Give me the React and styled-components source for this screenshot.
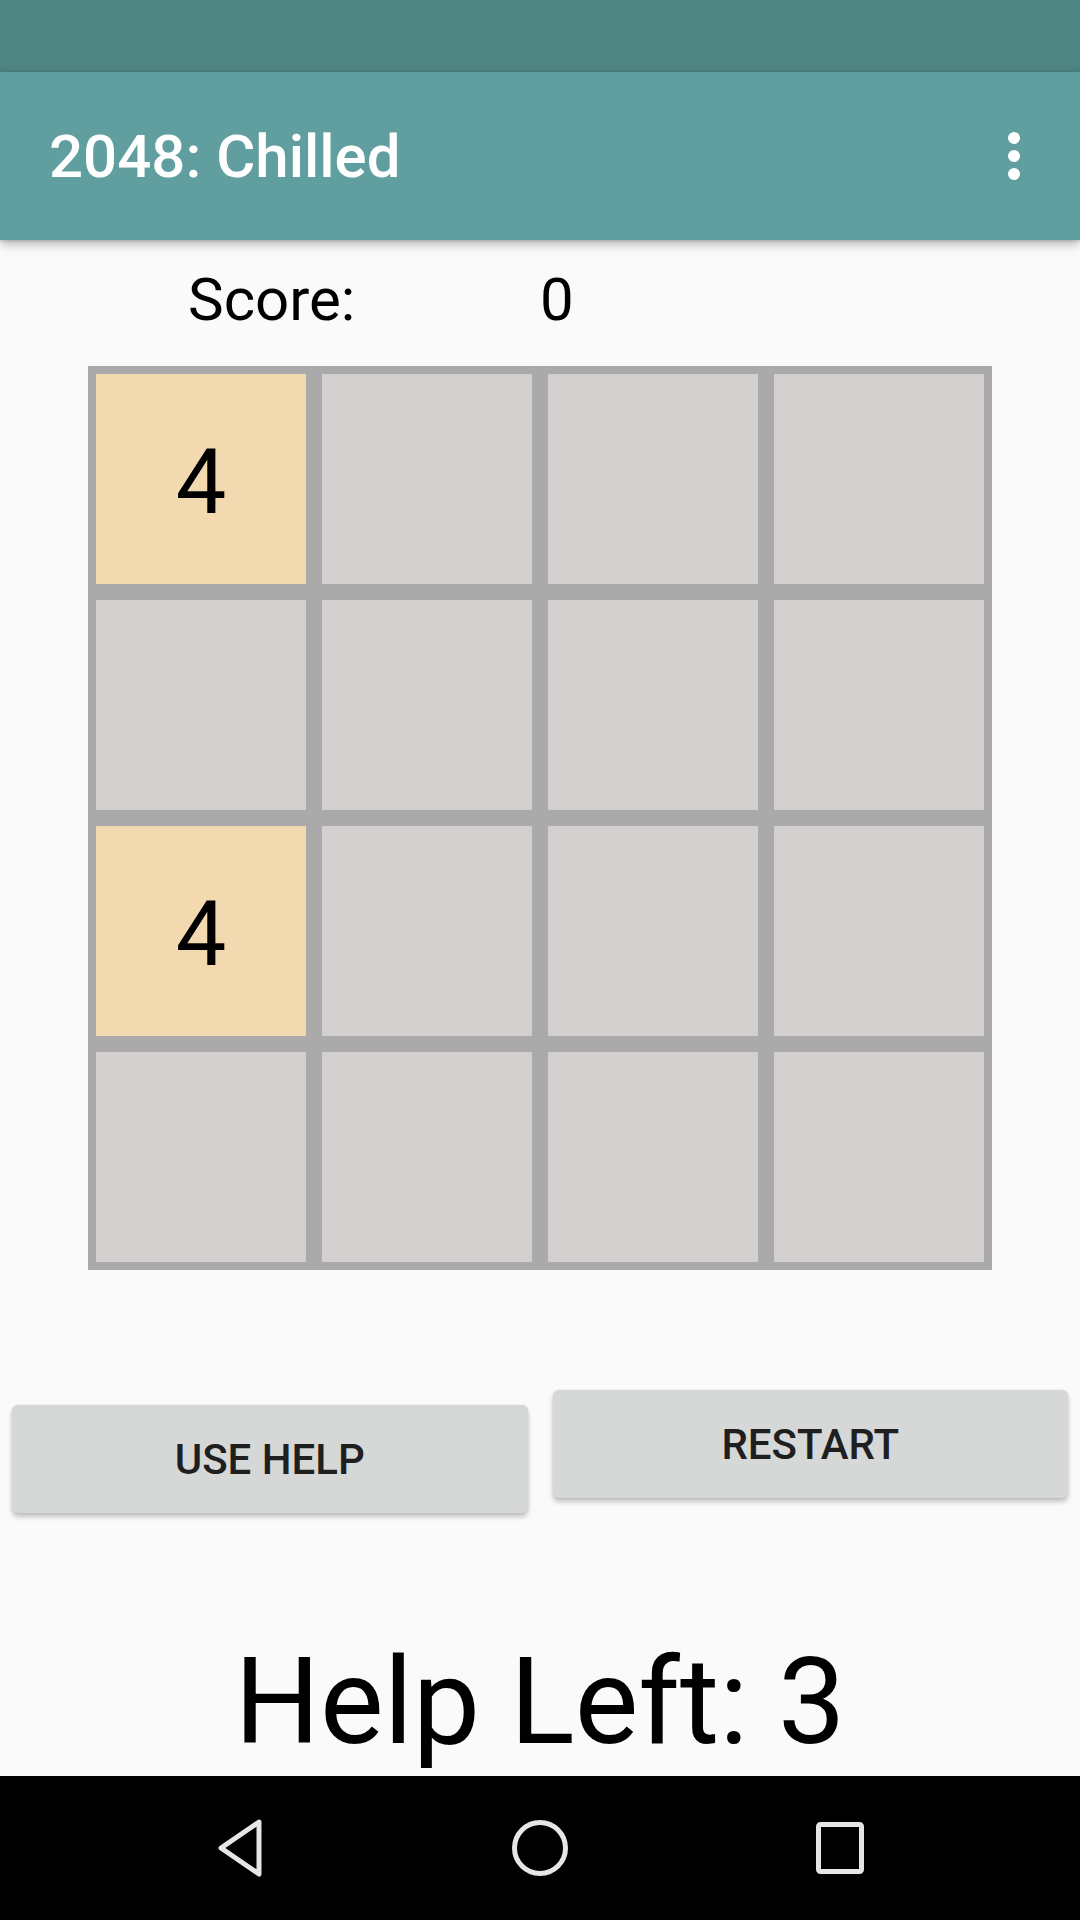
import React from "react";
import styled, { createGlobalStyle } from "styled-components";

const GlobalStyle = createGlobalStyle`
  html, body { margin: 0; padding: 0; background: #fafafa; }
  body { font-family: Roboto, "Noto Sans", sans-serif; }
  * { box-sizing: border-box; }
`;

const Screen = styled.div`
  width: 1080px;
  height: 1920px;
  display: flex;
  flex-direction: column;
  background: #fafafa;
  overflow: hidden;
`;

const StatusBar = styled.div`
  height: 72px;
  flex: none;
  background: #4e8482;
`;

const AppBar = styled.header`
  height: 168px;
  flex: none;
  background: #609e9f;
  display: flex;
  align-items: center;
  justify-content: space-between;
  padding: 0 60px 0 49px;
  position: relative;
  z-index: 1;
  box-shadow: 0 4px 10px rgba(0, 0, 0, 0.28), 0 1px 3px rgba(0, 0, 0, 0.15);
`;

const Title = styled.h1`
  margin: 0;
  font-family: Roboto, sans-serif;
  font-weight: 500;
  font-size: 60px;
  line-height: 60px;
  color: #ffffff;
  padding-top: 2px;
`;

const Main = styled.main`
  flex: 1;
  display: flex;
  flex-direction: column;
`;

const ScoreRow = styled.div`
  margin-top: 30px;
  padding-left: 188px;
  display: flex;
  font-family: Roboto, sans-serif;
  font-size: 60px;
  line-height: 60px;
  color: #000;
`;

const ScoreLabel = styled.span`
  width: 352px;
`;

const Board = styled.div`
  margin: 36px auto 0;
  width: 904px;
  padding: 8px;
  background: #aaaaaa;
  display: grid;
  grid-template-columns: repeat(4, 210px);
  grid-auto-rows: 210px;
  gap: 16px;
`;

const Tile = styled.div`
  background: ${(p) => (p.$value ? "#f3d9b0" : "#d3cfce")};
  display: flex;
  align-items: center;
  justify-content: center;
  padding-top: 7px;
  font-family: Roboto, sans-serif;
  font-size: 90px;
  line-height: 90px;
  color: #000;
`;

const ButtonRow = styled.div`
  margin-top: 120px;
  display: grid;
  grid-template-columns: 1fr 1fr;
  align-items: start;
  padding: 0 12px;
  gap: 25px;
`;

const ActionButton = styled.button`
  margin-top: ${(p) => p.$offset || 0}px;
  height: 108px;
  border: none;
  border-radius: 6px;
  background: #d6d7d7;
  color: #1f1f1f;
  font-family: Roboto, sans-serif;
  font-weight: 500;
  font-size: 42px;
  letter-spacing: 0;
  text-transform: uppercase;
  box-shadow: 0 4px 5px rgba(0, 0, 0, 0.22), 0 0 2px rgba(0, 0, 0, 0.12);
  padding: 0;
`;

const HelpText = styled.div`
  margin-top: 129px;
  text-align: center;
  font-family: Roboto, sans-serif;
  font-size: 120px;
  line-height: 120px;
  color: #000;
`;

const NavBar = styled.nav`
  height: 144px;
  flex: none;
  background: #000;
  display: flex;
  align-items: center;
  justify-content: center;
`;

const NavSlot = styled.div`
  width: 300px;
  display: flex;
  justify-content: center;
  align-items: center;
`;

const board = [
  [4, 0, 0, 0],
  [0, 0, 0, 0],
  [4, 0, 0, 0],
  [0, 0, 0, 0],
];

export default function App() {
  return (
    <>
      <GlobalStyle />
      <Screen>
        <StatusBar />
        <AppBar>
          <Title>2048: Chilled</Title>
          <svg width="12" height="48" viewBox="0 0 12 48">
            <circle cx="6" cy="6" r="6" fill="#fff" />
            <circle cx="6" cy="24" r="6" fill="#fff" />
            <circle cx="6" cy="42" r="6" fill="#fff" />
          </svg>
        </AppBar>
        <Main>
          <ScoreRow>
            <ScoreLabel>Score:</ScoreLabel>
            <span>0</span>
          </ScoreRow>
          <Board>
            {board.flat().map((v, i) => (
              <Tile key={i} $value={v}>
                {v ? v : ""}
              </Tile>
            ))}
          </Board>
          <ButtonRow>
            <ActionButton $offset={15}>Use Help</ActionButton>
            <ActionButton>Restart</ActionButton>
          </ButtonRow>
          <HelpText>Help Left: 3</HelpText>
        </Main>
        <NavBar>
          <NavSlot>
            <svg width="48" height="60" viewBox="0 0 48 60">
              <path
                d="M43 4 L5 30 L43 56 Z"
                fill="none"
                stroke="#e6e6e6"
                strokeWidth="5"
                strokeLinejoin="round"
              />
            </svg>
          </NavSlot>
          <NavSlot>
            <svg width="60" height="60" viewBox="0 0 60 60">
              <circle cx="30" cy="30" r="25.5" fill="none" stroke="#e6e6e6" strokeWidth="5" />
            </svg>
          </NavSlot>
          <NavSlot>
            <svg width="50" height="54" viewBox="0 0 50 54">
              <rect x="3.5" y="3.5" width="43" height="47" rx="2" fill="none" stroke="#e6e6e6" strokeWidth="5" />
            </svg>
          </NavSlot>
        </NavBar>
      </Screen>
    </>
  );
}
